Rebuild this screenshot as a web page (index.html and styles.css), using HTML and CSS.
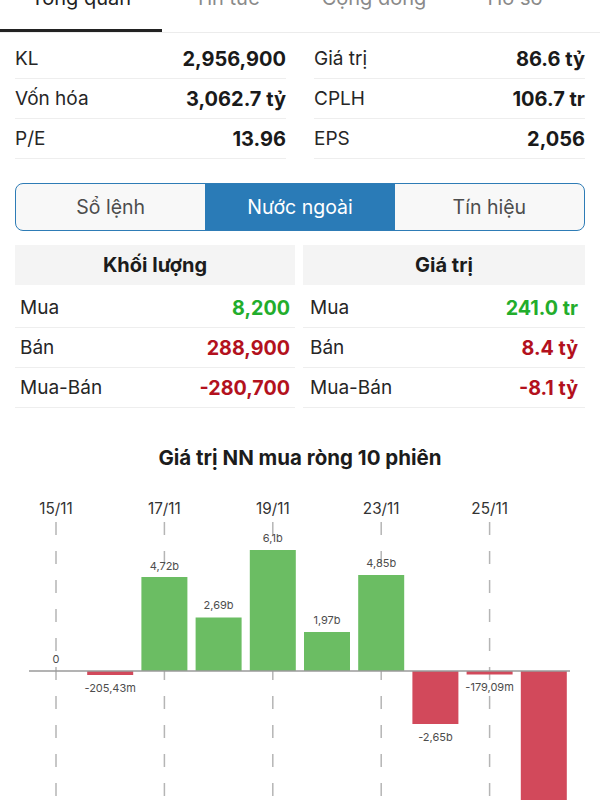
FILE: index.html
```html
<!DOCTYPE html>
<html lang="vi">
<head>
<meta charset="utf-8">
<link rel="stylesheet" href="styles.css">
</head>
<body>
<nav class="tabs">
  <div class="tab tab-1 active">Tổng quan</div>
  <div class="tab tab-2">Tin tức</div>
  <div class="tab tab-3">Cộng đồng</div>
  <div class="tab tab-4">Hồ sơ</div>
</nav>

<section class="stats">
  <div class="stat"><span class="lbl">KL</span><span class="val">2,956,900</span></div>
  <div class="stat"><span class="lbl">Giá trị</span><span class="val">86.6 tỷ</span></div>
  <div class="stat"><span class="lbl">Vốn hóa</span><span class="val">3,062.7 tỷ</span></div>
  <div class="stat"><span class="lbl">CPLH</span><span class="val">106.7 tr</span></div>
  <div class="stat"><span class="lbl">P/E</span><span class="val">13.96</span></div>
  <div class="stat"><span class="lbl">EPS</span><span class="val">2,056</span></div>
</section>

<div class="segmented">
  <div class="seg">Sổ lệnh</div>
  <div class="seg seg-active">Nước ngoài</div>
  <div class="seg">Tín hiệu</div>
</div>

<section class="foreign">
  <div class="ftable ftable-left">
    <div class="fhead">Khối lượng</div>
    <div class="frow"><span>Mua</span><span class="up">8,200</span></div>
    <div class="frow"><span>Bán</span><span class="down">288,900</span></div>
    <div class="frow"><span>Mua-Bán</span><span class="down">-280,700</span></div>
  </div>
  <div class="ftable ftable-right">
    <div class="fhead">Giá trị</div>
    <div class="frow"><span>Mua</span><span class="up">241.0 tr</span></div>
    <div class="frow"><span>Bán</span><span class="down">8.4 tỷ</span></div>
    <div class="frow"><span>Mua-Bán</span><span class="down">-8.1 tỷ</span></div>
  </div>
</section>

<h2 class="chart-title">Giá trị NN mua ròng 10 phiên</h2>

<svg class="chart" width="600" height="320" viewBox="0 0 600 320" xmlns="http://www.w3.org/2000/svg">
  <g class="grid">
    <line x1="56" y1="42" x2="56" y2="320"/>
    <line x1="164.4" y1="42" x2="164.4" y2="320"/>
    <line x1="272.8" y1="42" x2="272.8" y2="320"/>
    <line x1="381.2" y1="42" x2="381.2" y2="320"/>
    <line x1="489.6" y1="42" x2="489.6" y2="320"/>
  </g>
  <g class="dates">
    <text x="56" y="28">15/11</text>
    <text x="164.4" y="28">17/11</text>
    <text x="272.8" y="28">19/11</text>
    <text x="381.2" y="28">23/11</text>
    <text x="489.6" y="28">25/11</text>
  </g>
  <g class="bars-up">
    <rect x="141.4" y="97" width="46" height="94"/>
    <rect x="195.6" y="137.5" width="46" height="53.5"/>
    <rect x="249.8" y="70" width="46" height="121"/>
    <rect x="304" y="152" width="46" height="39"/>
    <rect x="358.2" y="95" width="46" height="96"/>
  </g>
  <g class="bars-down">
    <rect x="87.2" y="191" width="46" height="4"/>
    <rect x="412.4" y="191" width="46" height="53"/>
    <rect x="466.6" y="191" width="46" height="3.5"/>
    <rect x="520.8" y="191" width="46" height="160"/>
  </g>
  <line class="axis" x1="29" y1="191" x2="570" y2="191"/>
  <g class="vals">
    <text x="56" y="179">0</text>
    <text x="110.2" y="208">-205,43m</text>
    <text x="164.4" y="86">4,72b</text>
    <text x="218.6" y="125">2,69b</text>
    <text x="272.8" y="58">6,1b</text>
    <text x="327" y="140">1,97b</text>
    <text x="381.2" y="83">4,85b</text>
    <text x="435.4" y="257">-2,65b</text>
    <text x="489.6" y="207">-179,09m</text>
  </g>
</svg>
</body>
</html>
```

FILE: styles.css
```css
* { box-sizing: border-box; }

html, body {
  margin: 0;
  padding: 0;
  background: #fff;
  overflow: hidden;
}

body {
  font-family: Inter, "Noto Sans", "DejaVu Sans", sans-serif;
  color: #1c1c1c;
  width: 600px;
  height: 800px;
}

/* top tabs */
.tabs {
  display: flex;
  margin-top: -14px;
  border-bottom: 1px solid #ececec;
}

.tab {
  font-size: 20px;
  line-height: 24px;
  padding-bottom: 19px;
  border-bottom: 3px solid transparent;
  color: #8a8a8a;
  text-align: center;
  white-space: nowrap;
}

.tab-1 { width: 162px; }
.tab-2 { width: 130px; }
.tab-3 { width: 164px; }
.tab-4 { width: 118px; }

.tab.active {
  color: #222;
  border-bottom-color: #222;
}

/* stats */
.stats {
  display: grid;
  grid-template-columns: 1fr 1fr;
  column-gap: 28px;
  padding: 0 15px;
  margin-top: 6px;
}

.stat {
  height: 40px;
  border-bottom: 1px solid #eeeeee;
  display: flex;
  align-items: center;
  justify-content: space-between;
  font-size: 19px;
}

.lbl { color: #262626; }
.val { font-weight: 700; color: #1a1a1a; font-size: 20px; }

/* segmented control */
.segmented {
  margin: 24px 15px 0;
  height: 48px;
  border: 1.5px solid #2e7cb6;
  border-radius: 8px;
  overflow: hidden;
  display: grid;
  grid-template-columns: 1fr 1fr 1fr;
  background: #f8f8f8;
}

.seg {
  display: flex;
  align-items: center;
  justify-content: center;
  font-size: 19.5px;
  color: #4d4d4d;
}

.seg-active {
  background: #2a7bb7;
  color: #fff;
}

/* foreign tables */
.foreign {
  display: grid;
  grid-template-columns: 280px 282px;
  column-gap: 8px;
  padding: 0 15px;
  margin-top: 14px;
}

.fhead {
  height: 40px;
  background: #f4f4f4;
  display: flex;
  align-items: center;
  justify-content: center;
  font-weight: 700;
  font-size: 20px;
  color: #1c1c1c;
  margin-bottom: 3px;
}

.frow {
  height: 40px;
  border-bottom: 1px solid #eeeeee;
  display: flex;
  align-items: center;
  justify-content: space-between;
  font-size: 19px;
  color: #262626;
}

.ftable-left .frow { padding: 0 5px; }
.ftable-right .frow { padding: 0 7px; }

.frow .up, .frow .down { font-weight: 700; font-size: 19.7px; }
.up { color: #22ad2c; }
.down { color: #b3111d; }

/* chart */
.chart-title {
  margin: 38px 0 10px;
  font-size: 20.5px;
  line-height: 24px;
  font-weight: 700;
  text-align: center;
  color: #1c1c1c;
}

.chart { display: block; }

.grid line {
  stroke: #b5b5b5;
  stroke-width: 1.5;
  stroke-dasharray: 13 16;
}

.axis {
  stroke: #9a9a9a;
  stroke-width: 1.5;
}

.bars-up rect { fill: #6bbd63; }
.bars-down rect { fill: #d2495b; }

.dates text {
  font-family: Inter, "Noto Sans", sans-serif;
  font-size: 15.3px;
  fill: #333;
  text-anchor: middle;
  dominant-baseline: central;
}

.vals text {
  font-family: Inter, "Noto Sans", sans-serif;
  font-size: 11px;
  fill: #4d4d4d;
  text-anchor: middle;
  dominant-baseline: central;
}
```
